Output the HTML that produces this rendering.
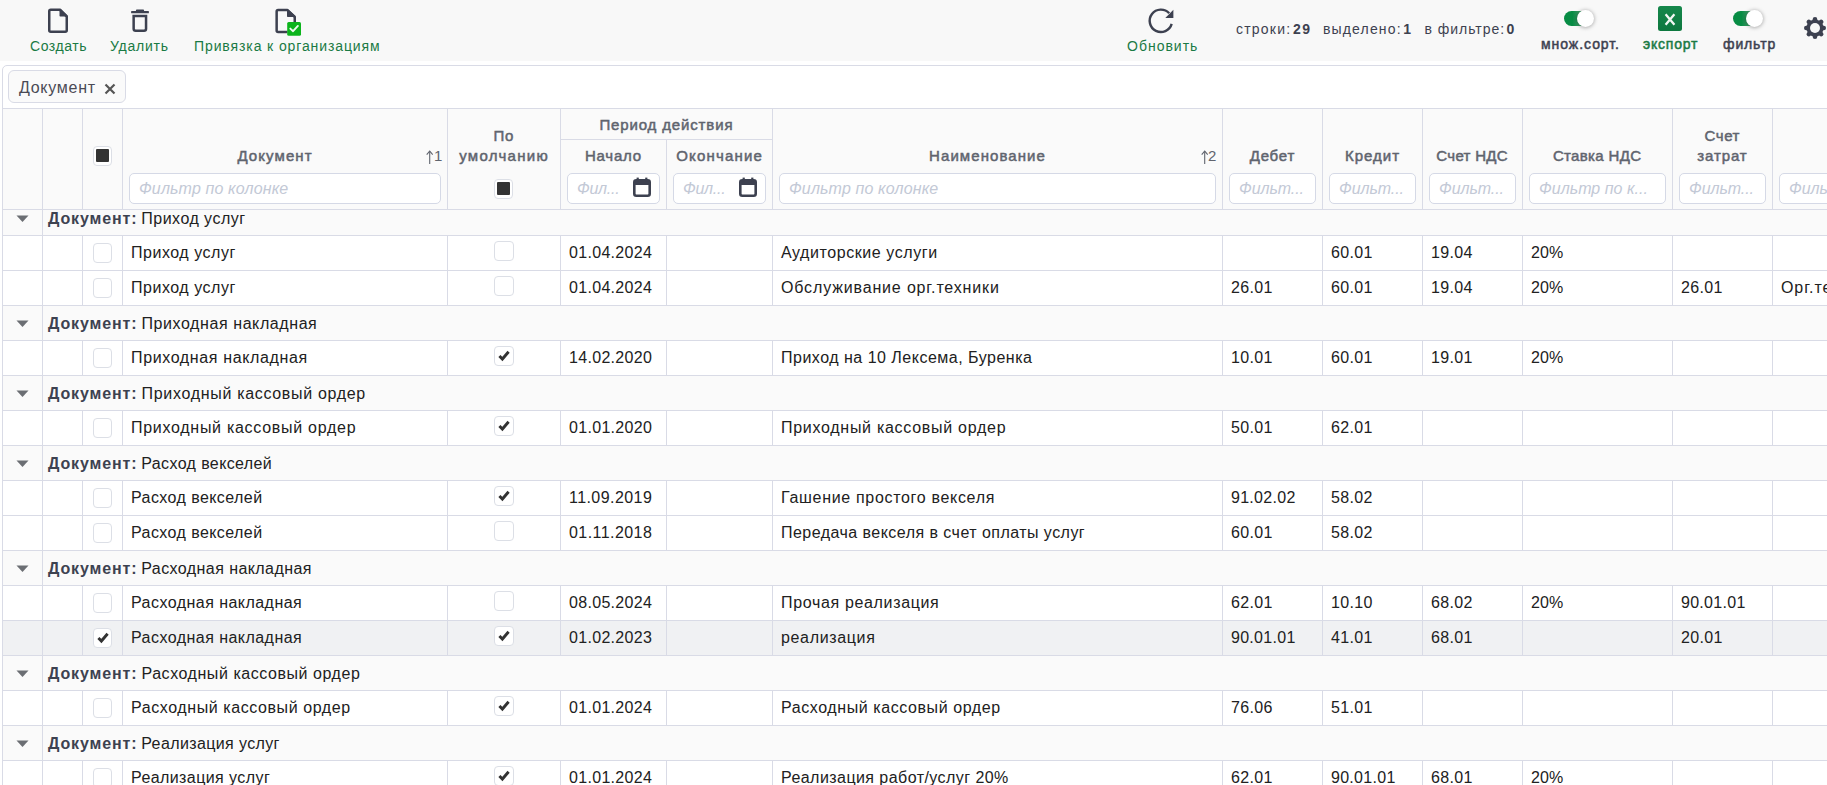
<!DOCTYPE html>
<html><head><meta charset="utf-8"><style>
html,body{margin:0;padding:0;width:1827px;height:785px;overflow:hidden;background:#fff;font-family:"Liberation Sans", sans-serif}
.t{position:absolute;white-space:nowrap}
</style></head><body>
<div style="position:absolute;left:0px;top:0px;width:1827px;height:61px;background:#f8f8f8"></div><div style="position:absolute;left:47px;top:8px"><svg width="22" height="26" viewBox="0 0 22 26"><path d="M2.25 3.25 Q2.25 1.75 3.75 1.75 L13 1.75 L19.75 8.5 L19.75 22.25 Q19.75 23.75 18.25 23.75 L3.75 23.75 Q2.25 23.75 2.25 22.25 Z" fill="none" stroke="#3d4150" stroke-width="2.5" stroke-linejoin="round"/><path d="M13.25 1.75 L13.25 7.85 L19.75 7.85 Z" fill="#3d4150" stroke="#3d4150" stroke-width="1.5" stroke-linejoin="round"/></svg></div><div style="position:absolute;left:130px;top:9px"><svg width="20" height="24" viewBox="0 0 20 24"><rect x="1.1" y="1.9" width="17.8" height="2.4" rx="0.6" fill="#3d4150"/><rect x="5.9" y="0.6" width="8.2" height="2" rx="1" fill="#3d4150"/><path d="M3.65 7.05 L16.05 7.05 L16.05 19.75 Q16.05 21.75 14.05 21.75 L5.65 21.75 Q3.65 21.75 3.65 19.75 Z" fill="none" stroke="#3d4150" stroke-width="2.5"/></svg></div><div style="position:absolute;left:273px;top:8px"><svg width="30" height="28" viewBox="0 0 30 28"><path d="M14.5 24.05 L5.15 24.05 Q3.65 24.05 3.65 22.55 L3.65 3.55 Q3.65 2.05 5.15 2.05 L14.5 2.05 L21.75 9 L21.75 14" fill="none" stroke="#3d4150" stroke-width="2.5" stroke-linejoin="round"/><path d="M14.75 2.05 L14.75 8.25 L21.75 8.25 Z" fill="#3d4150" stroke="#3d4150" stroke-width="1.5" stroke-linejoin="round"/><rect x="14.2" y="13.9" width="13.8" height="13.8" rx="1.5" fill="#0cb41c"/><path d="M17.3 20.6 L20.1 23.2 L24.9 17.9" fill="none" stroke="#eefaef" stroke-width="1.9" stroke-linecap="round" stroke-linejoin="round"/></svg></div><div class="t" style="left:30px;top:35.78px;line-height:20px;color:#1a7a44;"><span style="font-size:14px;font-weight:normal;letter-spacing:0.561px;">Создать</span></div><div class="t" style="left:110px;top:35.78px;line-height:20px;color:#1a7a44;"><span style="font-size:14px;font-weight:normal;letter-spacing:0.759px;">Удалить</span></div><div class="t" style="left:194px;top:35.78px;line-height:20px;color:#1a7a44;"><span style="font-size:14px;font-weight:normal;letter-spacing:0.893px;">Привязка к организациям</span></div><div style="position:absolute;left:1145px;top:5px"><svg width="32" height="32" viewBox="0 0 32 32"><path d="M26.67 18.89 A11.2 11.2 0 1 1 24.2 8.3" fill="none" stroke="#3d4150" stroke-width="2.4"/><path d="M20.3 12.9 L28.4 12.9 L28.4 4.8 Z" fill="#3d4150"/></svg></div><div class="t" style="left:1127px;top:35.78px;line-height:20px;color:#1a7a44;"><span style="font-size:14px;font-weight:normal;letter-spacing:0.997px;">Обновить</span></div><div class="t" style="left:1236px;top:18.78px;line-height:20px;color:#3d4150;"><span style="font-size:14px;font-weight:normal;letter-spacing:1.218px;">строки:</span></div><div class="t" style="left:1293px;top:18.78px;line-height:20px;color:#3d4150;"><span style="font-size:14px;font-weight:bold;letter-spacing:1.500px;">29</span></div><div class="t" style="left:1323px;top:18.78px;line-height:20px;color:#3d4150;"><span style="font-size:14px;font-weight:normal;letter-spacing:1.147px;">выделено:</span></div><div class="t" style="left:1403.3px;top:18.78px;line-height:20px;color:#3d4150;"><span style="font-size:14px;font-weight:bold;letter-spacing:0.219px;">1</span></div><div class="t" style="left:1424.5px;top:18.78px;line-height:20px;color:#3d4150;"><span style="font-size:14px;font-weight:normal;letter-spacing:0.963px;">в фильтре:</span></div><div class="t" style="left:1506.5px;top:18.78px;line-height:20px;color:#3d4150;"><span style="font-size:14px;font-weight:bold;letter-spacing:0.219px;">0</span></div><div style="position:absolute;left:1564px;top:11px;width:28px;height:15px;border-radius:7.5px;background:linear-gradient(90deg,#078c44 0%,#078c44 30%,#4a9f70 62%)"></div><div style="position:absolute;left:1577px;top:10px;width:17px;height:17px;border-radius:50%;background:#fff;box-shadow:0 0.5px 4px rgba(0,0,0,0.38)"></div><div style="position:absolute;left:1733px;top:11px;width:28px;height:15px;border-radius:7.5px;background:linear-gradient(90deg,#078c44 0%,#078c44 30%,#4a9f70 62%)"></div><div style="position:absolute;left:1746px;top:10px;width:17px;height:17px;border-radius:50%;background:#fff;box-shadow:0 0.5px 4px rgba(0,0,0,0.38)"></div><div class="t" style="left:1541px;top:33.78px;line-height:20px;color:#3d4150;"><span style="font-size:14px;font-weight:normal;-webkit-text-stroke:0.5px;letter-spacing:0.955px;">множ.сорт.</span></div><div style="position:absolute;left:1658px;top:6px;width:24px;height:25px;border-radius:2.5px;background:linear-gradient(180deg,#15874b,#0e783f)"><svg style="position:absolute;left:0;top:0" width="24" height="25" viewBox="0 0 24 25"><path d="M7.6 8.2 L16.4 18.8 M16.4 8.2 L7.6 18.8" stroke="#f2f7f3" stroke-width="2.3"/></svg></div><div class="t" style="left:1643px;top:33.78px;line-height:20px;color:#1a7a44;"><span style="font-size:14px;font-weight:normal;-webkit-text-stroke:0.5px;letter-spacing:0.801px;">экспорт</span></div><div class="t" style="left:1723px;top:33.78px;line-height:20px;color:#3d4150;"><span style="font-size:14px;font-weight:normal;-webkit-text-stroke:0.5px;letter-spacing:0.857px;">фильтр</span></div><div style="position:absolute;left:1800px;top:13px"><svg width="30" height="30" viewBox="0 0 30 30"><g stroke="#3d4150" stroke-width="4.6" stroke-linecap="round"><line x1="15" y1="15" x2="15" y2="6.3" transform="rotate(0 15 15)"/><line x1="15" y1="15" x2="15" y2="6.3" transform="rotate(45 15 15)"/><line x1="15" y1="15" x2="15" y2="6.3" transform="rotate(90 15 15)"/><line x1="15" y1="15" x2="15" y2="6.3" transform="rotate(135 15 15)"/><line x1="15" y1="15" x2="15" y2="6.3" transform="rotate(180 15 15)"/><line x1="15" y1="15" x2="15" y2="6.3" transform="rotate(225 15 15)"/><line x1="15" y1="15" x2="15" y2="6.3" transform="rotate(270 15 15)"/><line x1="15" y1="15" x2="15" y2="6.3" transform="rotate(315 15 15)"/></g><circle cx="15" cy="15" r="8.6" fill="#3d4150"/><circle cx="15" cy="15" r="5" fill="#f8f8f8"/></svg></div><div style="position:absolute;left:2px;top:65px;width:1900px;height:800px;border:1px solid #d9dbe6;border-radius:5px;box-sizing:border-box;background:#fff"></div><div style="position:absolute;left:8px;top:70px;width:118px;height:33px;box-sizing:border-box;border:1px solid #d9dbe6;border-radius:6px;background:#fafafa"></div><div class="t" style="left:19px;top:77.46px;line-height:22px;color:#4a4a55;"><span style="font-size:16px;font-weight:normal;letter-spacing:0.719px;">Документ</span></div><svg style="position:absolute;left:104px;top:83px" width="12" height="12" viewBox="0 0 12 12"><path d="M1.5 1.5 L10.5 10.5 M10.5 1.5 L1.5 10.5" stroke="#555" stroke-width="2.2"/></svg><div style="position:absolute;left:2px;top:108px;width:1900px;height:101px;background:#fafafa;border-top:1px solid #d9dbe6;box-sizing:border-box"></div><div style="position:absolute;left:2px;top:209px;width:1900px;height:1px;background:#d9dbe6"></div><div style="position:absolute;left:2px;top:108px;width:1px;height:101px;background:#d9dbe6"></div><div style="position:absolute;left:42px;top:108px;width:1px;height:101px;background:#d9dbe6"></div><div style="position:absolute;left:82px;top:108px;width:1px;height:101px;background:#d9dbe6"></div><div style="position:absolute;left:122px;top:108px;width:1px;height:101px;background:#d9dbe6"></div><div style="position:absolute;left:447px;top:108px;width:1px;height:101px;background:#d9dbe6"></div><div style="position:absolute;left:560px;top:108px;width:1px;height:101px;background:#d9dbe6"></div><div style="position:absolute;left:666px;top:139px;width:1px;height:70px;background:#d9dbe6"></div><div style="position:absolute;left:772px;top:108px;width:1px;height:101px;background:#d9dbe6"></div><div style="position:absolute;left:1222px;top:108px;width:1px;height:101px;background:#d9dbe6"></div><div style="position:absolute;left:1322px;top:108px;width:1px;height:101px;background:#d9dbe6"></div><div style="position:absolute;left:1422px;top:108px;width:1px;height:101px;background:#d9dbe6"></div><div style="position:absolute;left:1522px;top:108px;width:1px;height:101px;background:#d9dbe6"></div><div style="position:absolute;left:1672px;top:108px;width:1px;height:101px;background:#d9dbe6"></div><div style="position:absolute;left:1772px;top:108px;width:1px;height:101px;background:#d9dbe6"></div><div style="position:absolute;left:560px;top:139px;width:212px;height:1px;background:#d9dbe6"></div><div style="position:absolute;left:93px;top:146px;width:19px;height:20px;box-sizing:border-box;border:1px solid #dcdfe6;border-radius:4px;background:#fff"><div style="position:absolute;left:2px;top:2px;width:13px;height:13px;background:#333;border-radius:1px"></div></div><div class="t" style="left:122.5396875px;top:144.62px;line-height:21px;color:#60646e;width:305px;text-align:center;"><span style="font-size:15px;font-weight:normal;-webkit-text-stroke:0.5px;letter-spacing:1.079px;">Документ</span></div><svg style="position:absolute;left:426px;top:150px" width="8" height="15" viewBox="0 0 8 15"><path d="M3.7 1.2 L3.7 14" stroke="#60646e" stroke-width="1.1"/><path d="M0.7 4.6 L3.7 1.2 L6.7 4.6" fill="none" stroke="#60646e" stroke-width="1.1"/></svg><div class="t" style="left:434px;top:144.62px;line-height:21px;color:#60646e;"><span style="font-size:15px;font-weight:normal;letter-spacing:0.234px;">1</span></div><div class="t" style="left:447.323984375px;top:124.62px;line-height:21px;color:#60646e;width:113px;text-align:center;"><span style="font-size:15px;font-weight:normal;-webkit-text-stroke:0.5px;letter-spacing:0.648px;">По</span></div><div class="t" style="left:447.6527517361111px;top:144.62px;line-height:21px;color:#60646e;width:113px;text-align:center;"><span style="font-size:15px;font-weight:normal;-webkit-text-stroke:0.5px;letter-spacing:1.306px;">умолчанию</span></div><div style="position:absolute;left:494px;top:179px;width:19px;height:20px;box-sizing:border-box;border:1px solid #dcdfe6;border-radius:4px;background:#fff"><div style="position:absolute;left:2px;top:2px;width:13px;height:13px;background:#333;border-radius:1px"></div></div><div class="t" style="left:560.42753125px;top:113.62px;line-height:21px;color:#60646e;width:212px;text-align:center;"><span style="font-size:15px;font-weight:normal;-webkit-text-stroke:0.5px;letter-spacing:0.855px;">Период действия</span></div><div class="t" style="left:560.3946875px;top:144.62px;line-height:21px;color:#60646e;width:106px;text-align:center;"><span style="font-size:15px;font-weight:normal;-webkit-text-stroke:0.5px;letter-spacing:0.789px;">Начало</span></div><div class="t" style="left:666.58765625px;top:144.62px;line-height:21px;color:#60646e;width:106px;text-align:center;"><span style="font-size:15px;font-weight:normal;-webkit-text-stroke:0.5px;letter-spacing:1.175px;">Окончание</span></div><div class="t" style="left:772.5384635416667px;top:144.62px;line-height:21px;color:#60646e;width:430px;text-align:center;"><span style="font-size:15px;font-weight:normal;-webkit-text-stroke:0.5px;letter-spacing:1.077px;">Наименование</span></div><svg style="position:absolute;left:1200.5px;top:150px" width="8" height="15" viewBox="0 0 8 15"><path d="M3.7 1.2 L3.7 14" stroke="#60646e" stroke-width="1.1"/><path d="M0.7 4.6 L3.7 1.2 L6.7 4.6" fill="none" stroke="#60646e" stroke-width="1.1"/></svg><div class="t" style="left:1208px;top:144.62px;line-height:21px;color:#60646e;"><span style="font-size:15px;font-weight:normal;letter-spacing:0.234px;">2</span></div><div class="t" style="left:1222.39340625px;top:144.62px;line-height:21px;color:#60646e;width:100px;text-align:center;"><span style="font-size:15px;font-weight:normal;-webkit-text-stroke:0.5px;letter-spacing:0.787px;">Дебет</span></div><div class="t" style="left:1322.5156770833332px;top:144.62px;line-height:21px;color:#60646e;width:100px;text-align:center;"><span style="font-size:15px;font-weight:normal;-webkit-text-stroke:0.5px;letter-spacing:1.031px;">Кредит</span></div><div class="t" style="left:1422.14779296875px;top:144.62px;line-height:21px;color:#60646e;width:100px;text-align:center;"><span style="font-size:15px;font-weight:normal;-webkit-text-stroke:0.5px;letter-spacing:0.296px;">Счет НДС</span></div><div class="t" style="left:1522.1735234375px;top:144.62px;line-height:21px;color:#60646e;width:150px;text-align:center;"><span style="font-size:15px;font-weight:normal;-webkit-text-stroke:0.5px;letter-spacing:0.347px;">Ставка НДС</span></div><div class="t" style="left:1672.3078125px;top:124.62px;line-height:21px;color:#60646e;width:100px;text-align:center;"><span style="font-size:15px;font-weight:normal;-webkit-text-stroke:0.5px;letter-spacing:0.616px;">Счет</span></div><div class="t" style="left:1672.4504427083334px;top:144.62px;line-height:21px;color:#60646e;width:100px;text-align:center;"><span style="font-size:15px;font-weight:normal;-webkit-text-stroke:0.5px;letter-spacing:0.901px;">затрат</span></div><div style="position:absolute;left:129px;top:173px;width:312px;height:31px;box-sizing:border-box;border:1px solid #d5d9e6;border-radius:5px;background:#fff"></div><div class="t" style="left:139px;top:178.46px;line-height:22px;color:#c3c9d6;"><span style="font-size:16px;font-weight:normal;font-style:italic;letter-spacing:0.142px;">Фильтр по колонке</span></div><div style="position:absolute;left:567px;top:173px;width:93px;height:31px;box-sizing:border-box;border:1px solid #d5d9e6;border-radius:5px;background:#fff"></div><div class="t" style="left:577px;top:178.46px;line-height:22px;color:#c3c9d6;"><span style="font-size:16px;font-weight:normal;font-style:italic;letter-spacing:-0.256px;">Фил...</span></div><svg style="position:absolute;left:633px;top:177px" width="18" height="20" viewBox="0 0 18 20"><rect x="1.3" y="3.3" width="15.4" height="15.4" rx="2" fill="none" stroke="#3d4150" stroke-width="2.6"/><rect x="1" y="3" width="16" height="5" rx="1.5" fill="#3d4150"/><rect x="3.6" y="0.6" width="2.2" height="4" fill="#3d4150"/><rect x="12.2" y="0.6" width="2.2" height="4" fill="#3d4150"/></svg><div style="position:absolute;left:673px;top:173px;width:93px;height:31px;box-sizing:border-box;border:1px solid #d5d9e6;border-radius:5px;background:#fff"></div><div class="t" style="left:683px;top:178.46px;line-height:22px;color:#c3c9d6;"><span style="font-size:16px;font-weight:normal;font-style:italic;letter-spacing:-0.256px;">Фил...</span></div><svg style="position:absolute;left:739px;top:177px" width="18" height="20" viewBox="0 0 18 20"><rect x="1.3" y="3.3" width="15.4" height="15.4" rx="2" fill="none" stroke="#3d4150" stroke-width="2.6"/><rect x="1" y="3" width="16" height="5" rx="1.5" fill="#3d4150"/><rect x="3.6" y="0.6" width="2.2" height="4" fill="#3d4150"/><rect x="12.2" y="0.6" width="2.2" height="4" fill="#3d4150"/></svg><div style="position:absolute;left:779px;top:173px;width:437px;height:31px;box-sizing:border-box;border:1px solid #d5d9e6;border-radius:5px;background:#fff"></div><div class="t" style="left:789px;top:178.46px;line-height:22px;color:#c3c9d6;"><span style="font-size:16px;font-weight:normal;font-style:italic;letter-spacing:0.142px;">Фильтр по колонке</span></div><div style="position:absolute;left:1229px;top:173px;width:87px;height:31px;box-sizing:border-box;border:1px solid #d5d9e6;border-radius:5px;background:#fff"></div><div class="t" style="left:1239px;top:178.46px;line-height:22px;color:#c3c9d6;"><span style="font-size:16px;font-weight:normal;font-style:italic;letter-spacing:-0.067px;">Фильт...</span></div><div style="position:absolute;left:1329px;top:173px;width:87px;height:31px;box-sizing:border-box;border:1px solid #d5d9e6;border-radius:5px;background:#fff"></div><div class="t" style="left:1339px;top:178.46px;line-height:22px;color:#c3c9d6;"><span style="font-size:16px;font-weight:normal;font-style:italic;letter-spacing:-0.067px;">Фильт...</span></div><div style="position:absolute;left:1429px;top:173px;width:87px;height:31px;box-sizing:border-box;border:1px solid #d5d9e6;border-radius:5px;background:#fff"></div><div class="t" style="left:1439px;top:178.46px;line-height:22px;color:#c3c9d6;"><span style="font-size:16px;font-weight:normal;font-style:italic;letter-spacing:-0.067px;">Фильт...</span></div><div style="position:absolute;left:1529px;top:173px;width:137px;height:31px;box-sizing:border-box;border:1px solid #d5d9e6;border-radius:5px;background:#fff"></div><div class="t" style="left:1539px;top:178.46px;line-height:22px;color:#c3c9d6;"><span style="font-size:16px;font-weight:normal;font-style:italic;letter-spacing:0.034px;">Фильтр по к...</span></div><div style="position:absolute;left:1679px;top:173px;width:87px;height:31px;box-sizing:border-box;border:1px solid #d5d9e6;border-radius:5px;background:#fff"></div><div class="t" style="left:1689px;top:178.46px;line-height:22px;color:#c3c9d6;"><span style="font-size:16px;font-weight:normal;font-style:italic;letter-spacing:-0.067px;">Фильт...</span></div><div style="position:absolute;left:1779px;top:173px;width:87px;height:31px;box-sizing:border-box;border:1px solid #d5d9e6;border-radius:5px;background:#fff"></div><div class="t" style="left:1789px;top:178.46px;line-height:22px;color:#c3c9d6;"><span style="font-size:16px;font-weight:normal;font-style:italic;letter-spacing:-0.067px;">Фильт...</span></div><div style="position:absolute;left:2px;top:210px;width:1900px;height:25px;background:#fafafa"></div><div style="position:absolute;left:2px;top:210px;width:1px;height:26px;background:#d9dbe6"></div><div style="position:absolute;left:42px;top:210px;width:1px;height:26px;background:#d9dbe6"></div><svg style="position:absolute;left:16px;top:215px" width="13" height="8" viewBox="0 0 13 8"><path d="M0.5 0.5 L12.5 0.5 L6.5 7 Z" fill="#6b6e73"/></svg><div class="t" style="left:48px;top:208.46px;line-height:22px;color:#212121;"><span style="font-size:16px;font-weight:bold;color:#3d4250;letter-spacing:0.867px;">Документ:</span><span style="font-size:16px;font-weight:normal;letter-spacing:0.469px;margin-left:-1px;"> Приход услуг</span></div><div style="position:absolute;left:2px;top:235px;width:1900px;height:1px;background:#d9dbe6"></div><div style="position:absolute;left:2px;top:236px;width:1900px;height:34px;background:#fff"></div><div style="position:absolute;left:2px;top:236px;width:1px;height:35px;background:#d9dbe6"></div><div style="position:absolute;left:42px;top:236px;width:1px;height:35px;background:#d9dbe6"></div><div style="position:absolute;left:82px;top:236px;width:1px;height:35px;background:#d9dbe6"></div><div style="position:absolute;left:122px;top:236px;width:1px;height:35px;background:#d9dbe6"></div><div style="position:absolute;left:447px;top:236px;width:1px;height:35px;background:#d9dbe6"></div><div style="position:absolute;left:560px;top:236px;width:1px;height:35px;background:#d9dbe6"></div><div style="position:absolute;left:666px;top:236px;width:1px;height:35px;background:#d9dbe6"></div><div style="position:absolute;left:772px;top:236px;width:1px;height:35px;background:#d9dbe6"></div><div style="position:absolute;left:1222px;top:236px;width:1px;height:35px;background:#d9dbe6"></div><div style="position:absolute;left:1322px;top:236px;width:1px;height:35px;background:#d9dbe6"></div><div style="position:absolute;left:1422px;top:236px;width:1px;height:35px;background:#d9dbe6"></div><div style="position:absolute;left:1522px;top:236px;width:1px;height:35px;background:#d9dbe6"></div><div style="position:absolute;left:1672px;top:236px;width:1px;height:35px;background:#d9dbe6"></div><div style="position:absolute;left:1772px;top:236px;width:1px;height:35px;background:#d9dbe6"></div><div style="position:absolute;left:93px;top:243px;width:19px;height:20px;box-sizing:border-box;border:1px solid #dcdfe6;border-radius:4px;background:#fff"></div><div style="position:absolute;left:494px;top:241px;width:20px;height:20px;box-sizing:border-box;border:1px solid #dcdfe6;border-radius:4px;background:#fff"></div><div class="t" style="left:131px;top:242.46px;line-height:22px;color:#212121;"><span style="font-size:16px;font-weight:normal;letter-spacing:0.524px;">Приход услуг</span></div><div class="t" style="left:569px;top:242.46px;line-height:22px;color:#212121;"><span style="font-size:16px;font-weight:normal;letter-spacing:0.315px;">01.04.2024</span></div><div class="t" style="left:781px;top:242.46px;line-height:22px;color:#212121;"><span style="font-size:16px;font-weight:normal;letter-spacing:0.572px;">Аудиторские услуги</span></div><div class="t" style="left:1331px;top:242.46px;line-height:22px;color:#212121;"><span style="font-size:16px;font-weight:normal;letter-spacing:0.313px;">60.01</span></div><div class="t" style="left:1431px;top:242.46px;line-height:22px;color:#212121;"><span style="font-size:16px;font-weight:normal;letter-spacing:0.313px;">19.04</span></div><div class="t" style="left:1531px;top:242.46px;line-height:22px;color:#212121;"><span style="font-size:16px;font-weight:normal;letter-spacing:0.044px;">20%</span></div><div style="position:absolute;left:2px;top:270px;width:1900px;height:1px;background:#d9dbe6"></div><div style="position:absolute;left:2px;top:271px;width:1900px;height:34px;background:#fff"></div><div style="position:absolute;left:2px;top:271px;width:1px;height:35px;background:#d9dbe6"></div><div style="position:absolute;left:42px;top:271px;width:1px;height:35px;background:#d9dbe6"></div><div style="position:absolute;left:82px;top:271px;width:1px;height:35px;background:#d9dbe6"></div><div style="position:absolute;left:122px;top:271px;width:1px;height:35px;background:#d9dbe6"></div><div style="position:absolute;left:447px;top:271px;width:1px;height:35px;background:#d9dbe6"></div><div style="position:absolute;left:560px;top:271px;width:1px;height:35px;background:#d9dbe6"></div><div style="position:absolute;left:666px;top:271px;width:1px;height:35px;background:#d9dbe6"></div><div style="position:absolute;left:772px;top:271px;width:1px;height:35px;background:#d9dbe6"></div><div style="position:absolute;left:1222px;top:271px;width:1px;height:35px;background:#d9dbe6"></div><div style="position:absolute;left:1322px;top:271px;width:1px;height:35px;background:#d9dbe6"></div><div style="position:absolute;left:1422px;top:271px;width:1px;height:35px;background:#d9dbe6"></div><div style="position:absolute;left:1522px;top:271px;width:1px;height:35px;background:#d9dbe6"></div><div style="position:absolute;left:1672px;top:271px;width:1px;height:35px;background:#d9dbe6"></div><div style="position:absolute;left:1772px;top:271px;width:1px;height:35px;background:#d9dbe6"></div><div style="position:absolute;left:93px;top:278px;width:19px;height:20px;box-sizing:border-box;border:1px solid #dcdfe6;border-radius:4px;background:#fff"></div><div style="position:absolute;left:494px;top:276px;width:20px;height:20px;box-sizing:border-box;border:1px solid #dcdfe6;border-radius:4px;background:#fff"></div><div class="t" style="left:131px;top:277.46px;line-height:22px;color:#212121;"><span style="font-size:16px;font-weight:normal;letter-spacing:0.524px;">Приход услуг</span></div><div class="t" style="left:569px;top:277.46px;line-height:22px;color:#212121;"><span style="font-size:16px;font-weight:normal;letter-spacing:0.315px;">01.04.2024</span></div><div class="t" style="left:781px;top:277.46px;line-height:22px;color:#212121;"><span style="font-size:16px;font-weight:normal;letter-spacing:0.843px;">Обслуживание орг.техники</span></div><div class="t" style="left:1231px;top:277.46px;line-height:22px;color:#212121;"><span style="font-size:16px;font-weight:normal;letter-spacing:0.313px;">26.01</span></div><div class="t" style="left:1331px;top:277.46px;line-height:22px;color:#212121;"><span style="font-size:16px;font-weight:normal;letter-spacing:0.313px;">60.01</span></div><div class="t" style="left:1431px;top:277.46px;line-height:22px;color:#212121;"><span style="font-size:16px;font-weight:normal;letter-spacing:0.313px;">19.04</span></div><div class="t" style="left:1531px;top:277.46px;line-height:22px;color:#212121;"><span style="font-size:16px;font-weight:normal;letter-spacing:0.044px;">20%</span></div><div class="t" style="left:1681px;top:277.46px;line-height:22px;color:#212121;"><span style="font-size:16px;font-weight:normal;letter-spacing:0.313px;">26.01</span></div><div class="t" style="left:1781px;top:277.46px;line-height:22px;color:#212121;"><span style="font-size:16px;font-weight:normal;letter-spacing:0.928px;">Орг.техника</span></div><div style="position:absolute;left:2px;top:305px;width:1900px;height:1px;background:#d9dbe6"></div><div style="position:absolute;left:2px;top:306px;width:1900px;height:34px;background:#fafafa"></div><div style="position:absolute;left:2px;top:306px;width:1px;height:35px;background:#d9dbe6"></div><div style="position:absolute;left:42px;top:306px;width:1px;height:35px;background:#d9dbe6"></div><svg style="position:absolute;left:16px;top:320px" width="13" height="8" viewBox="0 0 13 8"><path d="M0.5 0.5 L12.5 0.5 L6.5 7 Z" fill="#6b6e73"/></svg><div class="t" style="left:48px;top:313.46px;line-height:22px;color:#212121;"><span style="font-size:16px;font-weight:bold;color:#3d4250;letter-spacing:0.867px;">Документ:</span><span style="font-size:16px;font-weight:normal;letter-spacing:0.586px;margin-left:-1px;"> Приходная накладная</span></div><div style="position:absolute;left:2px;top:340px;width:1900px;height:1px;background:#d9dbe6"></div><div style="position:absolute;left:2px;top:341px;width:1900px;height:34px;background:#fff"></div><div style="position:absolute;left:2px;top:341px;width:1px;height:35px;background:#d9dbe6"></div><div style="position:absolute;left:42px;top:341px;width:1px;height:35px;background:#d9dbe6"></div><div style="position:absolute;left:82px;top:341px;width:1px;height:35px;background:#d9dbe6"></div><div style="position:absolute;left:122px;top:341px;width:1px;height:35px;background:#d9dbe6"></div><div style="position:absolute;left:447px;top:341px;width:1px;height:35px;background:#d9dbe6"></div><div style="position:absolute;left:560px;top:341px;width:1px;height:35px;background:#d9dbe6"></div><div style="position:absolute;left:666px;top:341px;width:1px;height:35px;background:#d9dbe6"></div><div style="position:absolute;left:772px;top:341px;width:1px;height:35px;background:#d9dbe6"></div><div style="position:absolute;left:1222px;top:341px;width:1px;height:35px;background:#d9dbe6"></div><div style="position:absolute;left:1322px;top:341px;width:1px;height:35px;background:#d9dbe6"></div><div style="position:absolute;left:1422px;top:341px;width:1px;height:35px;background:#d9dbe6"></div><div style="position:absolute;left:1522px;top:341px;width:1px;height:35px;background:#d9dbe6"></div><div style="position:absolute;left:1672px;top:341px;width:1px;height:35px;background:#d9dbe6"></div><div style="position:absolute;left:1772px;top:341px;width:1px;height:35px;background:#d9dbe6"></div><div style="position:absolute;left:93px;top:348px;width:19px;height:20px;box-sizing:border-box;border:1px solid #dcdfe6;border-radius:4px;background:#fff"></div><div style="position:absolute;left:494px;top:346px;width:20px;height:20px;box-sizing:border-box;border:1px solid #dcdfe6;border-radius:4px;background:#fff"><svg style="position:absolute;left:0;top:0" width="19" height="19" viewBox="0 0 19 19"><path d="M4.4 8.9 L7.4 12.0 L13.6 4.8" fill="none" stroke="#333" stroke-width="2.9" stroke-linecap="butt" stroke-linejoin="miter"/></svg></div><div class="t" style="left:131px;top:347.46px;line-height:22px;color:#212121;"><span style="font-size:16px;font-weight:normal;letter-spacing:0.628px;">Приходная накладная</span></div><div class="t" style="left:569px;top:347.46px;line-height:22px;color:#212121;"><span style="font-size:16px;font-weight:normal;letter-spacing:0.315px;">14.02.2020</span></div><div class="t" style="left:781px;top:347.46px;line-height:22px;color:#212121;"><span style="font-size:16px;font-weight:normal;letter-spacing:0.497px;">Приход на 10 Лексема, Буренка</span></div><div class="t" style="left:1231px;top:347.46px;line-height:22px;color:#212121;"><span style="font-size:16px;font-weight:normal;letter-spacing:0.313px;">10.01</span></div><div class="t" style="left:1331px;top:347.46px;line-height:22px;color:#212121;"><span style="font-size:16px;font-weight:normal;letter-spacing:0.313px;">60.01</span></div><div class="t" style="left:1431px;top:347.46px;line-height:22px;color:#212121;"><span style="font-size:16px;font-weight:normal;letter-spacing:0.313px;">19.01</span></div><div class="t" style="left:1531px;top:347.46px;line-height:22px;color:#212121;"><span style="font-size:16px;font-weight:normal;letter-spacing:0.044px;">20%</span></div><div style="position:absolute;left:2px;top:375px;width:1900px;height:1px;background:#d9dbe6"></div><div style="position:absolute;left:2px;top:376px;width:1900px;height:34px;background:#fafafa"></div><div style="position:absolute;left:2px;top:376px;width:1px;height:35px;background:#d9dbe6"></div><div style="position:absolute;left:42px;top:376px;width:1px;height:35px;background:#d9dbe6"></div><svg style="position:absolute;left:16px;top:390px" width="13" height="8" viewBox="0 0 13 8"><path d="M0.5 0.5 L12.5 0.5 L6.5 7 Z" fill="#6b6e73"/></svg><div class="t" style="left:48px;top:383.46px;line-height:22px;color:#212121;"><span style="font-size:16px;font-weight:bold;color:#3d4250;letter-spacing:0.867px;">Документ:</span><span style="font-size:16px;font-weight:normal;letter-spacing:0.681px;margin-left:-1px;"> Приходный кассовый ордер</span></div><div style="position:absolute;left:2px;top:410px;width:1900px;height:1px;background:#d9dbe6"></div><div style="position:absolute;left:2px;top:411px;width:1900px;height:34px;background:#fff"></div><div style="position:absolute;left:2px;top:411px;width:1px;height:35px;background:#d9dbe6"></div><div style="position:absolute;left:42px;top:411px;width:1px;height:35px;background:#d9dbe6"></div><div style="position:absolute;left:82px;top:411px;width:1px;height:35px;background:#d9dbe6"></div><div style="position:absolute;left:122px;top:411px;width:1px;height:35px;background:#d9dbe6"></div><div style="position:absolute;left:447px;top:411px;width:1px;height:35px;background:#d9dbe6"></div><div style="position:absolute;left:560px;top:411px;width:1px;height:35px;background:#d9dbe6"></div><div style="position:absolute;left:666px;top:411px;width:1px;height:35px;background:#d9dbe6"></div><div style="position:absolute;left:772px;top:411px;width:1px;height:35px;background:#d9dbe6"></div><div style="position:absolute;left:1222px;top:411px;width:1px;height:35px;background:#d9dbe6"></div><div style="position:absolute;left:1322px;top:411px;width:1px;height:35px;background:#d9dbe6"></div><div style="position:absolute;left:1422px;top:411px;width:1px;height:35px;background:#d9dbe6"></div><div style="position:absolute;left:1522px;top:411px;width:1px;height:35px;background:#d9dbe6"></div><div style="position:absolute;left:1672px;top:411px;width:1px;height:35px;background:#d9dbe6"></div><div style="position:absolute;left:1772px;top:411px;width:1px;height:35px;background:#d9dbe6"></div><div style="position:absolute;left:93px;top:418px;width:19px;height:20px;box-sizing:border-box;border:1px solid #dcdfe6;border-radius:4px;background:#fff"></div><div style="position:absolute;left:494px;top:416px;width:20px;height:20px;box-sizing:border-box;border:1px solid #dcdfe6;border-radius:4px;background:#fff"><svg style="position:absolute;left:0;top:0" width="19" height="19" viewBox="0 0 19 19"><path d="M4.4 8.9 L7.4 12.0 L13.6 4.8" fill="none" stroke="#333" stroke-width="2.9" stroke-linecap="butt" stroke-linejoin="miter"/></svg></div><div class="t" style="left:131px;top:417.46px;line-height:22px;color:#212121;"><span style="font-size:16px;font-weight:normal;letter-spacing:0.718px;">Приходный кассовый ордер</span></div><div class="t" style="left:569px;top:417.46px;line-height:22px;color:#212121;"><span style="font-size:16px;font-weight:normal;letter-spacing:0.315px;">01.01.2020</span></div><div class="t" style="left:781px;top:417.46px;line-height:22px;color:#212121;"><span style="font-size:16px;font-weight:normal;letter-spacing:0.718px;">Приходный кассовый ордер</span></div><div class="t" style="left:1231px;top:417.46px;line-height:22px;color:#212121;"><span style="font-size:16px;font-weight:normal;letter-spacing:0.313px;">50.01</span></div><div class="t" style="left:1331px;top:417.46px;line-height:22px;color:#212121;"><span style="font-size:16px;font-weight:normal;letter-spacing:0.313px;">62.01</span></div><div style="position:absolute;left:2px;top:445px;width:1900px;height:1px;background:#d9dbe6"></div><div style="position:absolute;left:2px;top:446px;width:1900px;height:34px;background:#fafafa"></div><div style="position:absolute;left:2px;top:446px;width:1px;height:35px;background:#d9dbe6"></div><div style="position:absolute;left:42px;top:446px;width:1px;height:35px;background:#d9dbe6"></div><svg style="position:absolute;left:16px;top:460px" width="13" height="8" viewBox="0 0 13 8"><path d="M0.5 0.5 L12.5 0.5 L6.5 7 Z" fill="#6b6e73"/></svg><div class="t" style="left:48px;top:453.46px;line-height:22px;color:#212121;"><span style="font-size:16px;font-weight:bold;color:#3d4250;letter-spacing:0.867px;">Документ:</span><span style="font-size:16px;font-weight:normal;letter-spacing:0.386px;margin-left:-1px;"> Расход векселей</span></div><div style="position:absolute;left:2px;top:480px;width:1900px;height:1px;background:#d9dbe6"></div><div style="position:absolute;left:2px;top:481px;width:1900px;height:34px;background:#fff"></div><div style="position:absolute;left:2px;top:481px;width:1px;height:35px;background:#d9dbe6"></div><div style="position:absolute;left:42px;top:481px;width:1px;height:35px;background:#d9dbe6"></div><div style="position:absolute;left:82px;top:481px;width:1px;height:35px;background:#d9dbe6"></div><div style="position:absolute;left:122px;top:481px;width:1px;height:35px;background:#d9dbe6"></div><div style="position:absolute;left:447px;top:481px;width:1px;height:35px;background:#d9dbe6"></div><div style="position:absolute;left:560px;top:481px;width:1px;height:35px;background:#d9dbe6"></div><div style="position:absolute;left:666px;top:481px;width:1px;height:35px;background:#d9dbe6"></div><div style="position:absolute;left:772px;top:481px;width:1px;height:35px;background:#d9dbe6"></div><div style="position:absolute;left:1222px;top:481px;width:1px;height:35px;background:#d9dbe6"></div><div style="position:absolute;left:1322px;top:481px;width:1px;height:35px;background:#d9dbe6"></div><div style="position:absolute;left:1422px;top:481px;width:1px;height:35px;background:#d9dbe6"></div><div style="position:absolute;left:1522px;top:481px;width:1px;height:35px;background:#d9dbe6"></div><div style="position:absolute;left:1672px;top:481px;width:1px;height:35px;background:#d9dbe6"></div><div style="position:absolute;left:1772px;top:481px;width:1px;height:35px;background:#d9dbe6"></div><div style="position:absolute;left:93px;top:488px;width:19px;height:20px;box-sizing:border-box;border:1px solid #dcdfe6;border-radius:4px;background:#fff"></div><div style="position:absolute;left:494px;top:486px;width:20px;height:20px;box-sizing:border-box;border:1px solid #dcdfe6;border-radius:4px;background:#fff"><svg style="position:absolute;left:0;top:0" width="19" height="19" viewBox="0 0 19 19"><path d="M4.4 8.9 L7.4 12.0 L13.6 4.8" fill="none" stroke="#333" stroke-width="2.9" stroke-linecap="butt" stroke-linejoin="miter"/></svg></div><div class="t" style="left:131px;top:487.46px;line-height:22px;color:#212121;"><span style="font-size:16px;font-weight:normal;letter-spacing:0.426px;">Расход векселей</span></div><div class="t" style="left:569px;top:487.46px;line-height:22px;color:#212121;"><span style="font-size:16px;font-weight:normal;letter-spacing:0.434px;">11.09.2019</span></div><div class="t" style="left:781px;top:487.46px;line-height:22px;color:#212121;"><span style="font-size:16px;font-weight:normal;letter-spacing:0.683px;">Гашение простого векселя</span></div><div class="t" style="left:1231px;top:487.46px;line-height:22px;color:#212121;"><span style="font-size:16px;font-weight:normal;letter-spacing:0.285px;">91.02.02</span></div><div class="t" style="left:1331px;top:487.46px;line-height:22px;color:#212121;"><span style="font-size:16px;font-weight:normal;letter-spacing:0.313px;">58.02</span></div><div style="position:absolute;left:2px;top:515px;width:1900px;height:1px;background:#d9dbe6"></div><div style="position:absolute;left:2px;top:516px;width:1900px;height:34px;background:#fff"></div><div style="position:absolute;left:2px;top:516px;width:1px;height:35px;background:#d9dbe6"></div><div style="position:absolute;left:42px;top:516px;width:1px;height:35px;background:#d9dbe6"></div><div style="position:absolute;left:82px;top:516px;width:1px;height:35px;background:#d9dbe6"></div><div style="position:absolute;left:122px;top:516px;width:1px;height:35px;background:#d9dbe6"></div><div style="position:absolute;left:447px;top:516px;width:1px;height:35px;background:#d9dbe6"></div><div style="position:absolute;left:560px;top:516px;width:1px;height:35px;background:#d9dbe6"></div><div style="position:absolute;left:666px;top:516px;width:1px;height:35px;background:#d9dbe6"></div><div style="position:absolute;left:772px;top:516px;width:1px;height:35px;background:#d9dbe6"></div><div style="position:absolute;left:1222px;top:516px;width:1px;height:35px;background:#d9dbe6"></div><div style="position:absolute;left:1322px;top:516px;width:1px;height:35px;background:#d9dbe6"></div><div style="position:absolute;left:1422px;top:516px;width:1px;height:35px;background:#d9dbe6"></div><div style="position:absolute;left:1522px;top:516px;width:1px;height:35px;background:#d9dbe6"></div><div style="position:absolute;left:1672px;top:516px;width:1px;height:35px;background:#d9dbe6"></div><div style="position:absolute;left:1772px;top:516px;width:1px;height:35px;background:#d9dbe6"></div><div style="position:absolute;left:93px;top:523px;width:19px;height:20px;box-sizing:border-box;border:1px solid #dcdfe6;border-radius:4px;background:#fff"></div><div style="position:absolute;left:494px;top:521px;width:20px;height:20px;box-sizing:border-box;border:1px solid #dcdfe6;border-radius:4px;background:#fff"></div><div class="t" style="left:131px;top:522.46px;line-height:22px;color:#212121;"><span style="font-size:16px;font-weight:normal;letter-spacing:0.426px;">Расход векселей</span></div><div class="t" style="left:569px;top:522.46px;line-height:22px;color:#212121;"><span style="font-size:16px;font-weight:normal;letter-spacing:0.434px;">01.11.2018</span></div><div class="t" style="left:781px;top:522.46px;line-height:22px;color:#212121;"><span style="font-size:16px;font-weight:normal;letter-spacing:0.461px;">Передача векселя в счет оплаты услуг</span></div><div class="t" style="left:1231px;top:522.46px;line-height:22px;color:#212121;"><span style="font-size:16px;font-weight:normal;letter-spacing:0.313px;">60.01</span></div><div class="t" style="left:1331px;top:522.46px;line-height:22px;color:#212121;"><span style="font-size:16px;font-weight:normal;letter-spacing:0.313px;">58.02</span></div><div style="position:absolute;left:2px;top:550px;width:1900px;height:1px;background:#d9dbe6"></div><div style="position:absolute;left:2px;top:551px;width:1900px;height:34px;background:#fafafa"></div><div style="position:absolute;left:2px;top:551px;width:1px;height:35px;background:#d9dbe6"></div><div style="position:absolute;left:42px;top:551px;width:1px;height:35px;background:#d9dbe6"></div><svg style="position:absolute;left:16px;top:565px" width="13" height="8" viewBox="0 0 13 8"><path d="M0.5 0.5 L12.5 0.5 L6.5 7 Z" fill="#6b6e73"/></svg><div class="t" style="left:48px;top:558.46px;line-height:22px;color:#212121;"><span style="font-size:16px;font-weight:bold;color:#3d4250;letter-spacing:0.867px;">Документ:</span><span style="font-size:16px;font-weight:normal;letter-spacing:0.424px;margin-left:-1px;"> Расходная накладная</span></div><div style="position:absolute;left:2px;top:585px;width:1900px;height:1px;background:#d9dbe6"></div><div style="position:absolute;left:2px;top:586px;width:1900px;height:34px;background:#fff"></div><div style="position:absolute;left:2px;top:586px;width:1px;height:35px;background:#d9dbe6"></div><div style="position:absolute;left:42px;top:586px;width:1px;height:35px;background:#d9dbe6"></div><div style="position:absolute;left:82px;top:586px;width:1px;height:35px;background:#d9dbe6"></div><div style="position:absolute;left:122px;top:586px;width:1px;height:35px;background:#d9dbe6"></div><div style="position:absolute;left:447px;top:586px;width:1px;height:35px;background:#d9dbe6"></div><div style="position:absolute;left:560px;top:586px;width:1px;height:35px;background:#d9dbe6"></div><div style="position:absolute;left:666px;top:586px;width:1px;height:35px;background:#d9dbe6"></div><div style="position:absolute;left:772px;top:586px;width:1px;height:35px;background:#d9dbe6"></div><div style="position:absolute;left:1222px;top:586px;width:1px;height:35px;background:#d9dbe6"></div><div style="position:absolute;left:1322px;top:586px;width:1px;height:35px;background:#d9dbe6"></div><div style="position:absolute;left:1422px;top:586px;width:1px;height:35px;background:#d9dbe6"></div><div style="position:absolute;left:1522px;top:586px;width:1px;height:35px;background:#d9dbe6"></div><div style="position:absolute;left:1672px;top:586px;width:1px;height:35px;background:#d9dbe6"></div><div style="position:absolute;left:1772px;top:586px;width:1px;height:35px;background:#d9dbe6"></div><div style="position:absolute;left:93px;top:593px;width:19px;height:20px;box-sizing:border-box;border:1px solid #dcdfe6;border-radius:4px;background:#fff"></div><div style="position:absolute;left:494px;top:591px;width:20px;height:20px;box-sizing:border-box;border:1px solid #dcdfe6;border-radius:4px;background:#fff"></div><div class="t" style="left:131px;top:592.46px;line-height:22px;color:#212121;"><span style="font-size:16px;font-weight:normal;letter-spacing:0.458px;">Расходная накладная</span></div><div class="t" style="left:569px;top:592.46px;line-height:22px;color:#212121;"><span style="font-size:16px;font-weight:normal;letter-spacing:0.315px;">08.05.2024</span></div><div class="t" style="left:781px;top:592.46px;line-height:22px;color:#212121;"><span style="font-size:16px;font-weight:normal;letter-spacing:0.658px;">Прочая реализация</span></div><div class="t" style="left:1231px;top:592.46px;line-height:22px;color:#212121;"><span style="font-size:16px;font-weight:normal;letter-spacing:0.313px;">62.01</span></div><div class="t" style="left:1331px;top:592.46px;line-height:22px;color:#212121;"><span style="font-size:16px;font-weight:normal;letter-spacing:0.313px;">10.10</span></div><div class="t" style="left:1431px;top:592.46px;line-height:22px;color:#212121;"><span style="font-size:16px;font-weight:normal;letter-spacing:0.313px;">68.02</span></div><div class="t" style="left:1531px;top:592.46px;line-height:22px;color:#212121;"><span style="font-size:16px;font-weight:normal;letter-spacing:0.044px;">20%</span></div><div class="t" style="left:1681px;top:592.46px;line-height:22px;color:#212121;"><span style="font-size:16px;font-weight:normal;letter-spacing:0.285px;">90.01.01</span></div><div style="position:absolute;left:2px;top:620px;width:1900px;height:1px;background:#d9dbe6"></div><div style="position:absolute;left:2px;top:621px;width:1900px;height:34px;background:#f0f1f3"></div><div style="position:absolute;left:2px;top:621px;width:1px;height:35px;background:#d9dbe6"></div><div style="position:absolute;left:42px;top:621px;width:1px;height:35px;background:#d9dbe6"></div><div style="position:absolute;left:82px;top:621px;width:1px;height:35px;background:#d9dbe6"></div><div style="position:absolute;left:122px;top:621px;width:1px;height:35px;background:#d9dbe6"></div><div style="position:absolute;left:447px;top:621px;width:1px;height:35px;background:#d9dbe6"></div><div style="position:absolute;left:560px;top:621px;width:1px;height:35px;background:#d9dbe6"></div><div style="position:absolute;left:666px;top:621px;width:1px;height:35px;background:#d9dbe6"></div><div style="position:absolute;left:772px;top:621px;width:1px;height:35px;background:#d9dbe6"></div><div style="position:absolute;left:1222px;top:621px;width:1px;height:35px;background:#d9dbe6"></div><div style="position:absolute;left:1322px;top:621px;width:1px;height:35px;background:#d9dbe6"></div><div style="position:absolute;left:1422px;top:621px;width:1px;height:35px;background:#d9dbe6"></div><div style="position:absolute;left:1522px;top:621px;width:1px;height:35px;background:#d9dbe6"></div><div style="position:absolute;left:1672px;top:621px;width:1px;height:35px;background:#d9dbe6"></div><div style="position:absolute;left:1772px;top:621px;width:1px;height:35px;background:#d9dbe6"></div><div style="position:absolute;left:93px;top:628px;width:19px;height:20px;box-sizing:border-box;border:1px solid #dcdfe6;border-radius:4px;background:#fff"><svg style="position:absolute;left:0;top:0" width="19" height="19" viewBox="0 0 19 19"><path d="M4.4 8.9 L7.4 12.0 L13.6 4.8" fill="none" stroke="#333" stroke-width="2.9" stroke-linecap="butt" stroke-linejoin="miter"/></svg></div><div style="position:absolute;left:494px;top:626px;width:20px;height:20px;box-sizing:border-box;border:1px solid #dcdfe6;border-radius:4px;background:#fff"><svg style="position:absolute;left:0;top:0" width="19" height="19" viewBox="0 0 19 19"><path d="M4.4 8.9 L7.4 12.0 L13.6 4.8" fill="none" stroke="#333" stroke-width="2.9" stroke-linecap="butt" stroke-linejoin="miter"/></svg></div><div class="t" style="left:131px;top:627.46px;line-height:22px;color:#212121;"><span style="font-size:16px;font-weight:normal;letter-spacing:0.458px;">Расходная накладная</span></div><div class="t" style="left:569px;top:627.46px;line-height:22px;color:#212121;"><span style="font-size:16px;font-weight:normal;letter-spacing:0.315px;">01.02.2023</span></div><div class="t" style="left:781px;top:627.46px;line-height:22px;color:#212121;"><span style="font-size:16px;font-weight:normal;letter-spacing:0.656px;">реализация</span></div><div class="t" style="left:1231px;top:627.46px;line-height:22px;color:#212121;"><span style="font-size:16px;font-weight:normal;letter-spacing:0.285px;">90.01.01</span></div><div class="t" style="left:1331px;top:627.46px;line-height:22px;color:#212121;"><span style="font-size:16px;font-weight:normal;letter-spacing:0.313px;">41.01</span></div><div class="t" style="left:1431px;top:627.46px;line-height:22px;color:#212121;"><span style="font-size:16px;font-weight:normal;letter-spacing:0.313px;">68.01</span></div><div class="t" style="left:1681px;top:627.46px;line-height:22px;color:#212121;"><span style="font-size:16px;font-weight:normal;letter-spacing:0.313px;">20.01</span></div><div style="position:absolute;left:2px;top:655px;width:1900px;height:1px;background:#d9dbe6"></div><div style="position:absolute;left:2px;top:656px;width:1900px;height:34px;background:#fafafa"></div><div style="position:absolute;left:2px;top:656px;width:1px;height:35px;background:#d9dbe6"></div><div style="position:absolute;left:42px;top:656px;width:1px;height:35px;background:#d9dbe6"></div><svg style="position:absolute;left:16px;top:670px" width="13" height="8" viewBox="0 0 13 8"><path d="M0.5 0.5 L12.5 0.5 L6.5 7 Z" fill="#6b6e73"/></svg><div class="t" style="left:48px;top:663.46px;line-height:22px;color:#212121;"><span style="font-size:16px;font-weight:bold;color:#3d4250;letter-spacing:0.867px;">Документ:</span><span style="font-size:16px;font-weight:normal;letter-spacing:0.551px;margin-left:-1px;"> Расходный кассовый ордер</span></div><div style="position:absolute;left:2px;top:690px;width:1900px;height:1px;background:#d9dbe6"></div><div style="position:absolute;left:2px;top:691px;width:1900px;height:34px;background:#fff"></div><div style="position:absolute;left:2px;top:691px;width:1px;height:35px;background:#d9dbe6"></div><div style="position:absolute;left:42px;top:691px;width:1px;height:35px;background:#d9dbe6"></div><div style="position:absolute;left:82px;top:691px;width:1px;height:35px;background:#d9dbe6"></div><div style="position:absolute;left:122px;top:691px;width:1px;height:35px;background:#d9dbe6"></div><div style="position:absolute;left:447px;top:691px;width:1px;height:35px;background:#d9dbe6"></div><div style="position:absolute;left:560px;top:691px;width:1px;height:35px;background:#d9dbe6"></div><div style="position:absolute;left:666px;top:691px;width:1px;height:35px;background:#d9dbe6"></div><div style="position:absolute;left:772px;top:691px;width:1px;height:35px;background:#d9dbe6"></div><div style="position:absolute;left:1222px;top:691px;width:1px;height:35px;background:#d9dbe6"></div><div style="position:absolute;left:1322px;top:691px;width:1px;height:35px;background:#d9dbe6"></div><div style="position:absolute;left:1422px;top:691px;width:1px;height:35px;background:#d9dbe6"></div><div style="position:absolute;left:1522px;top:691px;width:1px;height:35px;background:#d9dbe6"></div><div style="position:absolute;left:1672px;top:691px;width:1px;height:35px;background:#d9dbe6"></div><div style="position:absolute;left:1772px;top:691px;width:1px;height:35px;background:#d9dbe6"></div><div style="position:absolute;left:93px;top:698px;width:19px;height:20px;box-sizing:border-box;border:1px solid #dcdfe6;border-radius:4px;background:#fff"></div><div style="position:absolute;left:494px;top:696px;width:20px;height:20px;box-sizing:border-box;border:1px solid #dcdfe6;border-radius:4px;background:#fff"><svg style="position:absolute;left:0;top:0" width="19" height="19" viewBox="0 0 19 19"><path d="M4.4 8.9 L7.4 12.0 L13.6 4.8" fill="none" stroke="#333" stroke-width="2.9" stroke-linecap="butt" stroke-linejoin="miter"/></svg></div><div class="t" style="left:131px;top:697.46px;line-height:22px;color:#212121;"><span style="font-size:16px;font-weight:normal;letter-spacing:0.583px;">Расходный кассовый ордер</span></div><div class="t" style="left:569px;top:697.46px;line-height:22px;color:#212121;"><span style="font-size:16px;font-weight:normal;letter-spacing:0.315px;">01.01.2024</span></div><div class="t" style="left:781px;top:697.46px;line-height:22px;color:#212121;"><span style="font-size:16px;font-weight:normal;letter-spacing:0.583px;">Расходный кассовый ордер</span></div><div class="t" style="left:1231px;top:697.46px;line-height:22px;color:#212121;"><span style="font-size:16px;font-weight:normal;letter-spacing:0.313px;">76.06</span></div><div class="t" style="left:1331px;top:697.46px;line-height:22px;color:#212121;"><span style="font-size:16px;font-weight:normal;letter-spacing:0.313px;">51.01</span></div><div style="position:absolute;left:2px;top:725px;width:1900px;height:1px;background:#d9dbe6"></div><div style="position:absolute;left:2px;top:726px;width:1900px;height:34px;background:#fafafa"></div><div style="position:absolute;left:2px;top:726px;width:1px;height:35px;background:#d9dbe6"></div><div style="position:absolute;left:42px;top:726px;width:1px;height:35px;background:#d9dbe6"></div><svg style="position:absolute;left:16px;top:740px" width="13" height="8" viewBox="0 0 13 8"><path d="M0.5 0.5 L12.5 0.5 L6.5 7 Z" fill="#6b6e73"/></svg><div class="t" style="left:48px;top:733.46px;line-height:22px;color:#212121;"><span style="font-size:16px;font-weight:bold;color:#3d4250;letter-spacing:0.867px;">Документ:</span><span style="font-size:16px;font-weight:normal;letter-spacing:0.380px;margin-left:-1px;"> Реализация услуг</span></div><div style="position:absolute;left:2px;top:760px;width:1900px;height:1px;background:#d9dbe6"></div><div style="position:absolute;left:2px;top:761px;width:1900px;height:34px;background:#fff"></div><div style="position:absolute;left:2px;top:761px;width:1px;height:35px;background:#d9dbe6"></div><div style="position:absolute;left:42px;top:761px;width:1px;height:35px;background:#d9dbe6"></div><div style="position:absolute;left:82px;top:761px;width:1px;height:35px;background:#d9dbe6"></div><div style="position:absolute;left:122px;top:761px;width:1px;height:35px;background:#d9dbe6"></div><div style="position:absolute;left:447px;top:761px;width:1px;height:35px;background:#d9dbe6"></div><div style="position:absolute;left:560px;top:761px;width:1px;height:35px;background:#d9dbe6"></div><div style="position:absolute;left:666px;top:761px;width:1px;height:35px;background:#d9dbe6"></div><div style="position:absolute;left:772px;top:761px;width:1px;height:35px;background:#d9dbe6"></div><div style="position:absolute;left:1222px;top:761px;width:1px;height:35px;background:#d9dbe6"></div><div style="position:absolute;left:1322px;top:761px;width:1px;height:35px;background:#d9dbe6"></div><div style="position:absolute;left:1422px;top:761px;width:1px;height:35px;background:#d9dbe6"></div><div style="position:absolute;left:1522px;top:761px;width:1px;height:35px;background:#d9dbe6"></div><div style="position:absolute;left:1672px;top:761px;width:1px;height:35px;background:#d9dbe6"></div><div style="position:absolute;left:1772px;top:761px;width:1px;height:35px;background:#d9dbe6"></div><div style="position:absolute;left:93px;top:768px;width:19px;height:20px;box-sizing:border-box;border:1px solid #dcdfe6;border-radius:4px;background:#fff"></div><div style="position:absolute;left:494px;top:766px;width:20px;height:20px;box-sizing:border-box;border:1px solid #dcdfe6;border-radius:4px;background:#fff"><svg style="position:absolute;left:0;top:0" width="19" height="19" viewBox="0 0 19 19"><path d="M4.4 8.9 L7.4 12.0 L13.6 4.8" fill="none" stroke="#333" stroke-width="2.9" stroke-linecap="butt" stroke-linejoin="miter"/></svg></div><div class="t" style="left:131px;top:767.46px;line-height:22px;color:#212121;"><span style="font-size:16px;font-weight:normal;letter-spacing:0.416px;">Реализация услуг</span></div><div class="t" style="left:569px;top:767.46px;line-height:22px;color:#212121;"><span style="font-size:16px;font-weight:normal;letter-spacing:0.315px;">01.01.2024</span></div><div class="t" style="left:781px;top:767.46px;line-height:22px;color:#212121;"><span style="font-size:16px;font-weight:normal;letter-spacing:0.444px;">Реализация работ/услуг 20%</span></div><div class="t" style="left:1231px;top:767.46px;line-height:22px;color:#212121;"><span style="font-size:16px;font-weight:normal;letter-spacing:0.313px;">62.01</span></div><div class="t" style="left:1331px;top:767.46px;line-height:22px;color:#212121;"><span style="font-size:16px;font-weight:normal;letter-spacing:0.285px;">90.01.01</span></div><div class="t" style="left:1431px;top:767.46px;line-height:22px;color:#212121;"><span style="font-size:16px;font-weight:normal;letter-spacing:0.313px;">68.01</span></div><div class="t" style="left:1531px;top:767.46px;line-height:22px;color:#212121;"><span style="font-size:16px;font-weight:normal;letter-spacing:0.044px;">20%</span></div><div style="position:absolute;left:2px;top:795px;width:1900px;height:1px;background:#d9dbe6"></div>
</body></html>
